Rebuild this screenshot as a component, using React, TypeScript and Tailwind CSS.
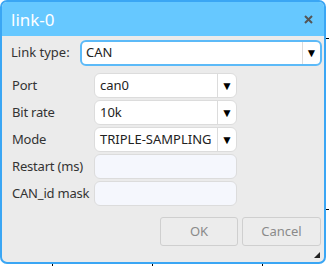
import React from "react";

const font = { fontFamily: '"Noto Sans", "Liberation Sans", sans-serif' };

function Select({ value, w }: { value: string; w: string }) {
  return (
    <div className={`flex h-[25px] ${w} items-stretch rounded-[6px] border border-[#dcdcdc] bg-white`}>
      <div className="flex flex-1 items-center pl-[5px] text-[13px] text-[#222]">{value}</div>
      <div className="flex w-[19px] items-center justify-center border-l border-[#dcdcdc] text-[12px] text-black">▼</div>
    </div>
  );
}

function Row({ label, children }: { label: string; children: React.ReactNode }) {
  return (
    <div className="flex h-[25px] items-center">
      <div className="w-[92px] whitespace-nowrap pl-[10px] text-[13px] tracking-[-0.2px] text-[#333]">{label}</div>
      {children}
    </div>
  );
}

export default function App() {
  return (
    <div className="relative h-[266px] w-[329px] bg-white" style={font}>
      <div className="flex h-[264px] w-[326px] flex-col overflow-hidden rounded-[7px] border-2 border-[#3aa6f4] bg-[#ebebeb]">
        <div className="flex h-[34px] shrink-0 items-center justify-between bg-[#66c8ff] pl-[9px] pr-[11px]">
          <span className="text-[17px] leading-none text-white">link-0</span>
          <svg width="9" height="9" viewBox="0 0 9 9">
            <path d="M1 1 L8 8 M8 1 L1 8" stroke="#555" strokeWidth="2" />
          </svg>
        </div>
        <div className="mt-[4px] flex h-[26px] items-center">
          <div className="w-[78px] whitespace-nowrap pl-[9px] text-[13px] text-[#333]">Link type:</div>
          <div className="flex h-[26px] w-[242px] items-stretch rounded-[6px] border-2 border-[#5cbaf8] bg-white">
            <div className="flex flex-1 items-center pl-[4px] text-[13px] text-[#222]">CAN</div>
            <div className="flex w-[18px] items-center justify-center border-l border-[#dcdcdc] text-[12px] text-black">▼</div>
          </div>
        </div>
        <div className="mt-[7px] flex flex-col gap-[2px]">
          <Row label="Port">
            <Select value="can0" w="w-[143px]" />
          </Row>
          <Row label="Bit rate">
            <Select value="10k" w="w-[143px]" />
          </Row>
          <Row label="Mode">
            <Select value="TRIPLE-SAMPLING" w="w-[143px]" />
          </Row>
          <Row label="Restart (ms)">
            <div className="h-[25px] w-[143px] rounded-[6px] border border-[#dcdcdc] bg-[#f5f7fd]" />
          </Row>
          <Row label="CAN_id mask">
            <div className="h-[25px] w-[143px] rounded-[6px] border border-[#dcdcdc] bg-[#f5f7fd]" />
          </Row>
        </div>
        <div className="mt-[11px] flex justify-end gap-[4px] pr-[3px]">
          <div className="flex h-[29px] w-[78px] items-center justify-center rounded-[3px] border border-[#cfcfcf] bg-[#ececec] text-[13px] text-[#8a8a8a]">OK</div>
          <div className="flex h-[29px] w-[79px] items-center justify-center rounded-[3px] border border-[#cfcfcf] bg-[#ececec] text-[13px] text-[#8a8a8a]">Cancel</div>
        </div>
        <div className="relative flex-1">
          <svg className="absolute bottom-[4px] right-[4px]" width="6" height="6" viewBox="0 0 6 6">
            <path d="M6 0 L6 6 L0 6 Z" fill="#222" />
          </svg>
        </div>
      </div>
      <div className="absolute left-[326px] top-[38px] h-px w-[3px] bg-black" />
      <div className="absolute left-[326px] top-[209px] h-px w-[3px] bg-black" />
      <div className="absolute left-[52px] top-[264px] h-[2px] w-px bg-black" />
      <div className="absolute left-[152px] top-[264px] h-[2px] w-px bg-black" />
      <div className="absolute left-[262px] top-[264px] h-[2px] w-px bg-black" />
    </div>
  );
}
